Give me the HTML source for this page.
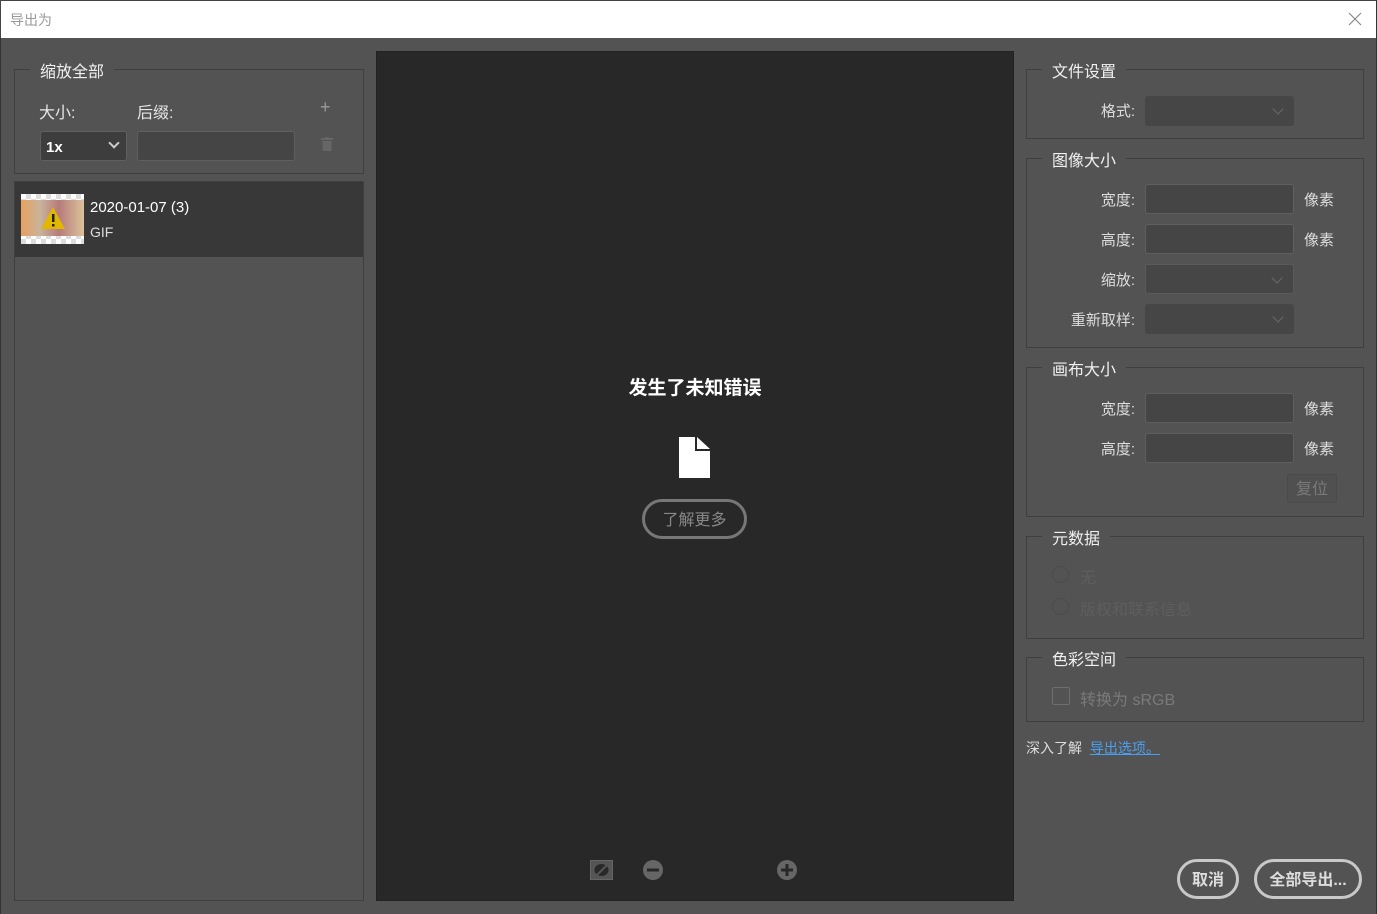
<!DOCTYPE html>
<html><head><meta charset="utf-8"><style>
*{margin:0;padding:0;box-sizing:border-box}
body{width:1377px;height:914px;background:#535353;font-family:"Liberation Sans","Noto Sans CJK SC",sans-serif;color:#e6e6e6;position:relative;overflow:hidden;font-size:15px}
.a{position:absolute}
.fs{position:absolute;border:1px solid #3f3f3f}
.lg{position:absolute;background:#535353;padding:0 10px;font-size:16px;color:#f0f0f0;top:-7px;left:15px;line-height:20px}
.inp{position:absolute;width:149px;height:30px;background:#454545;border:1px solid #5f5f5f;border-radius:3px}
.sel{position:absolute;width:149px;height:30px;background:#464646;border-radius:3px}
.sel::after{content:"";position:absolute;right:12px;top:9px;width:7px;height:7px;border-right:1.5px solid #6a6a6a;border-bottom:1.5px solid #6a6a6a;transform:rotate(45deg)}
.lb{position:absolute;font-size:15px;color:#ddd;text-align:right;width:110px;line-height:20px}
.px{position:absolute;font-size:15px;color:#ddd;line-height:20px}
</style></head><body>
<div class="a" style="left:0;top:0;width:1377px;height:38px;background:#fff;border:1px solid #444;border-bottom:none"></div>
<div class="a" style="left:10px;top:10px;font-size:14px;color:#999">导出为</div>
<svg class="a" style="left:1348px;top:12px" width="14" height="14"><path d="M1 1L13 13M13 1L1 13" stroke="#888" stroke-width="1.2"/></svg>
<div class="a" style="left:0;top:38px;width:1px;height:876px;background:#333"></div>
<div class="a" style="left:1376px;top:0;width:1px;height:914px;background:#333"></div>

<!-- left -->
<div class="fs" style="left:14px;top:69px;width:350px;height:105px"><div class="lg">缩放全部</div></div>
<div class="a" style="left:39px;top:99px;font-size:16px">大小:</div>
<div class="a" style="left:137px;top:99px;font-size:16px">后缀:</div>
<div class="a" style="left:320px;top:97px;font-size:18px;color:#999">+</div>
<div class="a" style="left:40px;top:131px;width:87px;height:30px;background:#3d3d3d;border:1px solid #5f5f5f;border-radius:3px"></div>
<div class="a" style="left:46px;top:139px;font-size:15px;font-weight:bold;color:#fff">1x</div>
<div class="a" style="left:110px;top:139px;width:8px;height:8px;border-right:2px solid #ccc;border-bottom:2px solid #ccc;transform:rotate(45deg)"></div>
<div class="a" style="left:137px;top:131px;width:158px;height:30px;background:#454545;border:1px solid #5f5f5f;border-radius:3px"></div>
<svg class="a" style="left:321px;top:137px" width="12" height="14"><rect x="0" y="1" width="12" height="2" fill="#666"/><rect x="4" y="0" width="4" height="2" fill="#666"/><rect x="1.5" y="4" width="9" height="10" fill="#666"/></svg>
<div class="fs" style="left:14px;top:181px;width:350px;height:720px"></div>
<div class="a" style="left:15px;top:182px;width:348px;height:75px;background:#383838"></div>
<div class="a" style="left:21px;top:194px;width:63px;height:50px;background:repeating-conic-gradient(#ddd 0 25%,#fff 0 50%) 0 0/10px 10px"></div>
<div class="a" style="left:21px;top:200px;width:63px;height:36px;background:linear-gradient(90deg,#e8a060,#c9b49a 30%,#b77b7c 60%,#dcc29a)"></div>
<svg class="a" style="left:40px;top:206px" width="26" height="24"><path d="M13 1L25 23H1Z" fill="#e0b800"/><rect x="12" y="8" width="2.5" height="8" fill="#222"/><rect x="12" y="18" width="2.5" height="2.5" fill="#222"/></svg>
<div class="a" style="left:90px;top:199px;font-size:15px;color:#fff">2020-01-07 (3)</div>
<div class="a" style="left:90px;top:224px;font-size:14px;color:#ddd">GIF</div>

<!-- center -->
<div class="a" style="left:376px;top:51px;width:638px;height:850px;background:#282828;border:1px solid #222"></div>
<div class="a" style="left:376px;top:373px;width:638px;text-align:center;font-size:19px;font-weight:bold;color:#fff">发生了未知错误</div>
<svg class="a" style="left:679px;top:437px" width="31" height="41"><path d="M0 0H16V14H31V41H0Z" fill="#fff"/><path d="M18 0L31 12H18Z" fill="#fff"/></svg>
<div class="a" style="left:642px;top:499px;width:105px;height:40px;border:3px solid #777;border-radius:20px;text-align:center;line-height:38px;font-size:16px;color:#888">了解更多</div>
<svg class="a" style="left:590px;top:860px" width="24" height="20"><rect x="0.5" y="0.5" width="22" height="19" fill="#555" stroke="#666"/><ellipse cx="11.5" cy="10" rx="7" ry="6" fill="#282828"/><path d="M4 18L20 2" stroke="#555" stroke-width="2"/></svg>
<svg class="a" style="left:643px;top:860px" width="20" height="20"><circle cx="10" cy="10" r="10" fill="#666"/><rect x="4" y="8.5" width="12" height="3" fill="#282828"/></svg>
<svg class="a" style="left:777px;top:860px" width="20" height="20"><circle cx="10" cy="10" r="10" fill="#666"/><rect x="4" y="8.5" width="12" height="3" fill="#282828"/><rect x="8.5" y="4" width="3" height="12" fill="#282828"/></svg>

<!-- right -->
<div class="fs" style="left:1026px;top:69px;width:338px;height:70px"><div class="lg">文件设置</div></div>
<div class="lb" style="left:1025px;top:102px">格式:</div>
<div class="sel" style="left:1145px;top:96px"></div>
<div class="fs" style="left:1026px;top:158px;width:338px;height:190px"><div class="lg">图像大小</div></div>
<div class="lb" style="left:1025px;top:191px">宽度:</div><div class="inp" style="left:1145px;top:184px"></div><div class="px" style="left:1304px;top:191px">像素</div>
<div class="lb" style="left:1025px;top:231px">高度:</div><div class="inp" style="left:1145px;top:224px"></div><div class="px" style="left:1304px;top:231px">像素</div>
<div class="lb" style="left:1025px;top:271px">缩放:</div><div class="sel" style="left:1145px;top:264px;border:1px solid #5a5a5a"></div>
<div class="lb" style="left:1025px;top:311px">重新取样:</div><div class="sel" style="left:1145px;top:304px"></div>
<div class="fs" style="left:1026px;top:367px;width:338px;height:150px"><div class="lg">画布大小</div></div>
<div class="lb" style="left:1025px;top:400px">宽度:</div><div class="inp" style="left:1145px;top:393px"></div><div class="px" style="left:1304px;top:400px">像素</div>
<div class="lb" style="left:1025px;top:440px">高度:</div><div class="inp" style="left:1145px;top:433px"></div><div class="px" style="left:1304px;top:440px">像素</div>
<div class="a" style="left:1287px;top:474px;width:50px;height:29px;border:1px solid #4a4a4a;border-radius:3px;background:#505050;text-align:center;line-height:29px;font-size:16px;color:#7a7a7a">复位</div>
<div class="fs" style="left:1026px;top:536px;width:338px;height:103px"><div class="lg">元数据</div></div>
<div class="a" style="left:1052px;top:566px;width:17px;height:17px;border:1px solid #4c4c4c;border-radius:50%"></div>
<div class="a" style="left:1080px;top:564px;color:#5e5e5e;font-size:16px">无</div>
<div class="a" style="left:1052px;top:598px;width:17px;height:17px;border:1px solid #4c4c4c;border-radius:50%"></div>
<div class="a" style="left:1080px;top:596px;color:#5e5e5e;font-size:16px">版权和联系信息</div>
<div class="fs" style="left:1026px;top:657px;width:338px;height:65px"><div class="lg">色彩空间</div></div>
<div class="a" style="left:1052px;top:687px;width:18px;height:18px;border:1px solid #6e6e6e;border-radius:2px"></div>
<div class="a" style="left:1080px;top:686px;color:#7a7a7a;font-size:16px">转换为 sRGB</div>
<div class="a" style="left:1026px;top:738px;font-size:14px;color:#ddd">深入了解 <span style="color:#4b9ef0;text-decoration:underline;margin-left:4px">导出选项。</span></div>
<div class="a" style="left:1177px;top:859px;width:62px;height:40px;border:3px solid #c8c8c8;border-radius:20px;text-align:center;line-height:38px;font-size:16px;font-weight:bold;color:#ddd">取消</div>
<div class="a" style="left:1254px;top:859px;width:108px;height:40px;border:3px solid #c8c8c8;border-radius:20px;text-align:center;line-height:38px;font-size:16px;font-weight:bold;color:#ddd">全部导出...</div>
</body></html>
